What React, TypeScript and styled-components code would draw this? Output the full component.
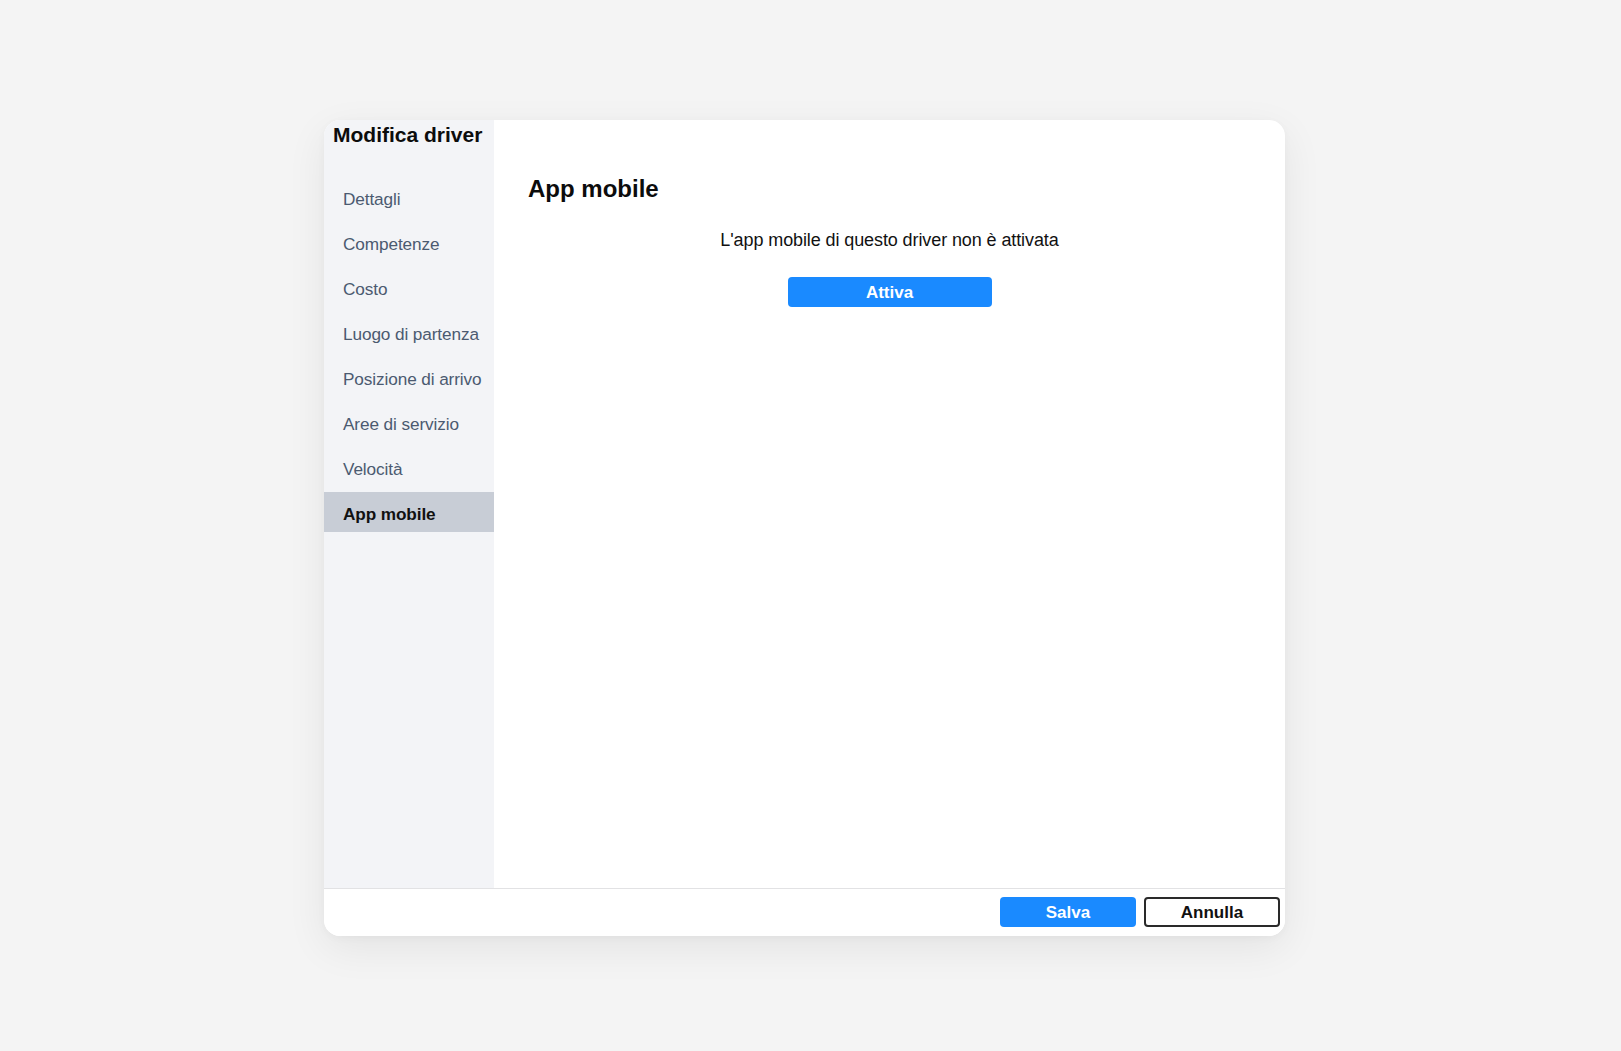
import React, { useState } from 'react';
import styled, { createGlobalStyle } from 'styled-components';

const GlobalStyle = createGlobalStyle`
  html, body {
    margin: 0;
    padding: 0;
    background: #f4f4f4;
    font-family: "Liberation Sans", Arial, Helvetica, sans-serif;
  }
  * { box-sizing: border-box; }
`;

const Page = styled.div`
  min-height: 1051px;
  padding: 120px 0 0 324px;
`;

const Modal = styled.div`
  width: 961px;
  height: 816px;
  background: #ffffff;
  border-radius: 16px;
  overflow: hidden;
  display: flex;
  flex-direction: column;
  box-shadow: 0 12px 40px rgba(0, 0, 0, 0.07), 0 2px 8px rgba(0, 0, 0, 0.03);
`;

const Body = styled.div`
  flex: 1;
  display: flex;
  min-height: 0;
`;

const Sidebar = styled.nav`
  width: 170px;
  background: #f3f4f7;
  display: flex;
  flex-direction: column;
`;

const SidebarTitle = styled.h1`
  margin: 0 0 19px;
  padding: 3px 0 0 9px;
  height: 38px;
  font-size: 21px;
  line-height: 24px;
  font-weight: 700;
  color: #0c0c0c;
`;

const NavItem = styled.button<{ $active?: boolean }>`
  all: unset;
  display: flex;
  align-items: center;
  height: 40px;
  margin-bottom: 5px;
  padding: 4px 0 0 19px;
  box-sizing: border-box;
  font-family: inherit;
  font-size: 17.2px;
  letter-spacing: -0.1px;
  cursor: pointer;
  color: ${(p) => (p.$active ? '#111111' : '#4b5a70')};
  font-weight: ${(p) => (p.$active ? 700 : 400)};
  background: ${(p) => (p.$active ? '#c8cdd6' : 'transparent')};
`;

const Main = styled.section`
  flex: 1;
  padding: 55px 34px 0;
  display: flex;
  flex-direction: column;
`;

const MainTitle = styled.h2`
  margin: 0;
  font-size: 24px;
  line-height: 28px;
  font-weight: 700;
  color: #0c0c0c;
`;

const Message = styled.p`
  margin: 26px 0 0;
  text-align: center;
  font-size: 18px;
  line-height: 22px;
  color: #111111;
  letter-spacing: -0.1px;
`;

const Centered = styled.div`
  display: flex;
  justify-content: center;
  margin-top: 26px;
`;

const Button = styled.button<{ $variant?: 'primary' | 'outline'; $width: number }>`
  width: ${(p) => p.$width}px;
  height: 30px;
  border-radius: 4px;
  font-family: inherit;
  font-size: 17px;
  font-weight: 700;
  cursor: pointer;
  padding: 2px 0 0;
  ${(p) =>
    p.$variant === 'outline'
      ? `
    background: #ffffff;
    color: #111111;
    border: 2px solid #2a2a2a;
  `
      : `
    background: #1a8aff;
    color: #ffffff;
    border: none;
  `}
`;

const Footer = styled.footer`
  height: 48px;
  border-top: 1px solid #e2e2e4;
  display: flex;
  justify-content: flex-end;
  align-items: center;
  gap: 8px;
  padding: 0 5px 2px 0;
  background: #ffffff;
`;

const sections = [
  'Dettagli',
  'Competenze',
  'Costo',
  'Luogo di partenza',
  'Posizione di arrivo',
  'Aree di servizio',
  'Velocità',
  'App mobile'
];

export default function App(): JSX.Element {
  const [active, setActive] = useState('App mobile');

  return (
    <>
      <GlobalStyle />
      <Page>
        <Modal>
          <Body>
            <Sidebar>
              <SidebarTitle>Modifica driver</SidebarTitle>
              {sections.map((s) => (
                <NavItem key={s} $active={s === active} onClick={() => setActive(s)}>
                  {s}
                </NavItem>
              ))}
            </Sidebar>
            <Main>
              <MainTitle>App mobile</MainTitle>
              <Message>L&apos;app mobile di questo driver non è attivata</Message>
              <Centered>
                <Button $width={204}>Attiva</Button>
              </Centered>
            </Main>
          </Body>
          <Footer>
            <Button $width={136}>Salva</Button>
            <Button $width={136} $variant="outline">
              Annulla
            </Button>
          </Footer>
        </Modal>
      </Page>
    </>
  );
}
